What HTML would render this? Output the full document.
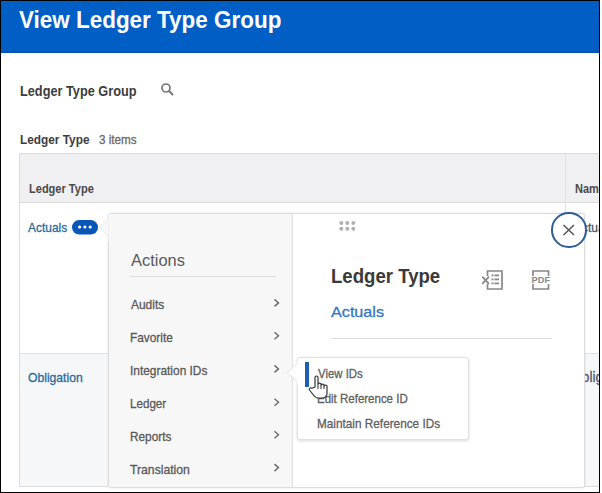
<!DOCTYPE html>
<html><head><meta charset="utf-8">
<style>
*{margin:0;padding:0;box-sizing:border-box}
html,body{width:602px;height:493px;overflow:hidden;background:#fff}
body{position:relative;font-family:"Liberation Sans",sans-serif}
.a{position:absolute}
.t{position:absolute;white-space:nowrap;line-height:1;transform-origin:0 0}
</style></head><body>

<!-- header -->
<div class="a" style="left:0;top:0;width:602px;height:52.5px;background:#005ec5;border-bottom:2px solid #0355b5"></div>

<!-- section labels -->
<svg class="a" style="left:158px;top:80px" width="18" height="18" viewBox="0 0 18 18">
  <circle cx="8" cy="8" r="4" fill="none" stroke="#777" stroke-width="1.7"/>
  <line x1="11" y1="11" x2="14.5" y2="14.5" stroke="#777" stroke-width="2" stroke-linecap="round"/>
</svg>

<!-- table -->
<div class="a" style="left:19px;top:153px;width:600px;height:334px;border:1px solid #dcdcdc;border-right:none;background:#fff"></div>
<div class="a" style="left:20px;top:154px;width:600px;height:49px;background:#f0f0f2;border-bottom:1px solid #dcdcdc"></div>
<div class="a" style="left:565px;top:154px;width:1px;height:333px;background:#e2e2e2"></div>
<div class="a" style="left:20px;top:353px;width:600px;height:133px;background:#f6f7f9;border-top:1px solid #e0e0e0"></div>
<!-- pill -->
<svg class="a" style="left:70px;top:218px" width="30" height="19" viewBox="0 0 30 19">
  <rect x="2" y="2" width="26" height="14.6" rx="7.3" fill="#0857b8"/>
  <circle cx="9.6" cy="9" r="1.55" fill="#fff"/><circle cx="14.9" cy="9" r="1.55" fill="#fff"/><circle cx="20.2" cy="9" r="1.55" fill="#fff"/>
</svg>

<div class="t" style="left:18.80px;top:8.00px;font-size:24.8px;font-weight:bold;color:#fff;transform:scaleX(0.9052)">View Ledger Type Group</div>
<div class="t" style="left:20.00px;top:84.00px;font-size:14.5px;font-weight:bold;color:#3d3d3d;transform:scaleX(0.8780)">Ledger Type Group</div>
<div class="t" style="left:20.00px;top:133.00px;font-size:13.5px;font-weight:bold;color:#3d3d3d;transform:scaleX(0.8764)">Ledger Type</div>
<div class="t" style="left:98.90px;top:133.00px;font-size:13px;font-weight:normal;color:#6a6a6a;transform:scaleX(0.8986);-webkit-text-stroke:0.3px #6a6a6a">3 items</div>
<div class="t" style="left:29.30px;top:183.00px;font-size:12.4px;font-weight:bold;color:#4a4a4a;transform:scaleX(0.8907)">Ledger Type</div>
<div class="t" style="left:575.30px;top:183.00px;font-size:12.4px;font-weight:bold;color:#4a4a4a;transform:scaleX(0.8900)">Name</div>
<div class="t" style="left:28.30px;top:221.00px;font-size:13.2px;font-weight:normal;color:#2a6a9a;transform:scaleX(0.9049);-webkit-text-stroke:0.3px #2a6a9a">Actuals</div>
<div class="t" style="left:28.00px;top:371.00px;font-size:13.2px;font-weight:normal;color:#2a6a9a;transform:scaleX(0.9213);-webkit-text-stroke:0.3px #2a6a9a">Obligation</div>
<div class="t" style="left:573.80px;top:221.00px;font-size:13.2px;font-weight:normal;color:#4a5560;transform:scaleX(0.9050);-webkit-text-stroke:0.3px #4a5560">Actuals</div>
<div class="t" style="left:571.00px;top:371.00px;font-size:13.8px;font-weight:normal;color:#5a5870;transform:scaleX(1.0000);-webkit-text-stroke:0.3px #5a5870">Obligation</div>
<!-- popup -->
<div class="a" style="left:108px;top:213px;width:477px;height:275px;background:#fff;border:1px solid #dcdcdc;border-radius:3px;box-shadow:0 0 3px rgba(0,0,0,0.09)"></div>
<div class="a" style="left:109px;top:214px;width:183px;height:273px;background:#f7f7f7;border-radius:2px 0 0 2px"></div>
<div class="a" style="left:292px;top:214px;width:1px;height:273px;background:#e2e2e2;box-shadow:0 0 1.5px rgba(0,0,0,0.08)"></div>
<svg class="a" style="left:98px;top:214px" width="12" height="28" viewBox="0 0 12 28">
  <path d="M10.5 4 L1.5 13.4 L10.5 23" fill="#f7f7f7" stroke="#e8e8ee" stroke-width="1"/>
  <rect x="10.5" y="0" width="2" height="28" fill="#f7f7f7"/>
</svg>

<div class="a" style="left:130px;top:276px;width:146px;height:1px;background:#dcdcdc"></div>
<svg class="a" style="left:270px;top:296px" width="14" height="182" viewBox="0 0 14 182">
  <g fill="none" stroke="#6a6a6a" stroke-width="1.4">
    <path d="M4.5 3.4 L8.5 6.9 L4.5 10.4"/>
    <path d="M4.5 36.2 L8.5 39.7 L4.5 43.2"/>
    <path d="M4.5 69.4 L8.5 72.9 L4.5 76.4"/>
    <path d="M4.5 102.7 L8.5 106.2 L4.5 109.7"/>
    <path d="M4.5 135.2 L8.5 138.7 L4.5 142.2"/>
    <path d="M4.5 168.1 L8.5 171.6 L4.5 175.1"/>
  </g>
</svg>

<!-- right panel -->
<svg class="a" style="left:338px;top:220px" width="18" height="12" viewBox="0 0 18 12">
  <g fill="#b0b0b0"><circle cx="3.3" cy="3" r="2"/><circle cx="9.3" cy="3" r="2"/><circle cx="15.3" cy="3" r="2"/>
  <circle cx="3.3" cy="8.8" r="2"/><circle cx="9.3" cy="8.8" r="2"/><circle cx="15.3" cy="8.8" r="2"/></g>
</svg>
<div class="a" style="left:331px;top:338px;width:221px;height:1px;background:#dcdcdc"></div>

<!-- excel icon -->
<svg class="a" style="left:480px;top:268px" width="26" height="24" viewBox="0 0 26 24">
  <g fill="none" stroke="#888" stroke-width="1.7">
    <path d="M7.5 8 V3 H22 V21 H7.5 V16"/>
  </g>
  <path d="M2.2 8.6 L9 15.9 M9 8.6 L2.2 15.9" stroke="#888" stroke-width="1.8"/>
  <g fill="#888">
    <rect x="11.5" y="6.5" width="2" height="1.8"/><rect x="14.5" y="6.5" width="4.5" height="1.8"/>
    <rect x="11.5" y="10.5" width="2" height="1.8"/><rect x="14.5" y="10.5" width="4.5" height="1.8"/>
    <rect x="11.5" y="14.5" width="2" height="1.8"/><rect x="14.5" y="14.5" width="4.5" height="1.8"/>
  </g>
</svg>
<!-- pdf icon -->
<svg class="a" style="left:530px;top:268px" width="22" height="24" viewBox="0 0 22 24">
  <g fill="none" stroke="#888" stroke-width="1.7">
    <path d="M3 8 V3 H18.5 V8"/>
    <path d="M3 16 V21 H18.5 V16"/>
  </g>
  <text x="10.8" y="15.4" font-family="Liberation Sans" font-weight="bold" font-size="9" fill="#888" text-anchor="middle" textLength="18.5" lengthAdjust="spacingAndGlyphs">PDF</text>
</svg>

<!-- close -->
<div class="a" style="left:551px;top:212px;width:35.5px;height:35.5px;border-radius:50%;border:2px solid #2b5d97;background:#fff"></div>
<svg class="a" style="left:560px;top:222px" width="18" height="16" viewBox="0 0 18 16">
  <path d="M3.5 3 L14 13 M14 3 L3.5 13" stroke="#555" stroke-width="1.5"/>
</svg>

<!-- submenu -->
<div class="a" style="left:297px;top:357px;width:172px;height:82.5px;background:#fff;border:1px solid #e2e2e2;border-radius:3px;box-shadow:0 1px 3px rgba(0,0,0,0.15)"></div>
<svg class="a" style="left:286px;top:361px" width="13" height="24" viewBox="0 0 13 24">
  <path d="M11.5 2 L1.2 11.5 L11.5 21" fill="#fff" stroke="#e2e2e2" stroke-width="1"/>
  <rect x="11" y="0" width="2" height="24" fill="#fff"/>
</svg>
<div class="a" style="left:305px;top:362px;width:3.5px;height:24.5px;background:#1c5fb0"></div>

<div class="t" style="left:130.50px;top:252.00px;font-size:16.5px;font-weight:normal;color:#5a5a5a;transform:scaleX(0.9971)">Actions</div>
<div class="t" style="left:130.80px;top:298.00px;font-size:13.4px;font-weight:normal;color:#585858;transform:scaleX(0.8928);-webkit-text-stroke:0.3px #585858">Audits</div>
<div class="t" style="left:129.92px;top:331.00px;font-size:13.4px;font-weight:normal;color:#585858;transform:scaleX(0.8844);-webkit-text-stroke:0.3px #585858">Favorite</div>
<div class="t" style="left:129.91px;top:364.00px;font-size:13.4px;font-weight:normal;color:#585858;transform:scaleX(0.8890);-webkit-text-stroke:0.3px #585858">Integration IDs</div>
<div class="t" style="left:129.93px;top:397.00px;font-size:13.4px;font-weight:normal;color:#585858;transform:scaleX(0.8682);-webkit-text-stroke:0.3px #585858">Ledger</div>
<div class="t" style="left:129.92px;top:430.00px;font-size:13.4px;font-weight:normal;color:#585858;transform:scaleX(0.8811);-webkit-text-stroke:0.3px #585858">Reports</div>
<div class="t" style="left:130.30px;top:463.00px;font-size:13.4px;font-weight:normal;color:#585858;transform:scaleX(0.9112);-webkit-text-stroke:0.3px #585858">Translation</div>
<div class="t" style="left:330.84px;top:267.00px;font-size:19.3px;font-weight:bold;color:#3a3a3a;transform:scaleX(0.9646)">Ledger Type</div>
<div class="t" style="left:330.90px;top:304.00px;font-size:15.5px;font-weight:normal;color:#3477c0;transform:scaleX(1.0435);-webkit-text-stroke:0.3px #3477c0">Actuals</div>
<div class="t" style="left:317.50px;top:368.00px;font-size:12.6px;font-weight:normal;color:#606060;transform:scaleX(0.9052);-webkit-text-stroke:0.3px #606060">View IDs</div>
<div class="t" style="left:316.89px;top:393.00px;font-size:12.6px;font-weight:normal;color:#606060;transform:scaleX(0.9125);-webkit-text-stroke:0.3px #606060">Edit Reference ID</div>
<div class="t" style="left:316.86px;top:418.00px;font-size:12.6px;font-weight:normal;color:#606060;transform:scaleX(0.9355);-webkit-text-stroke:0.3px #606060">Maintain Reference IDs</div>
<!-- cursor -->
<svg class="a" style="left:306px;top:372px" width="26" height="30" viewBox="0 0 26 30">
  <path d="M9 15 V5.5 C9 3.5 12 3.5 12 5.5 V12 C12 10.8 15 10.8 15 12 V13 C15 11.8 18 11.8 18 13 V14 C18 12.8 21 12.8 21 14 V21 C21 24 19 26 17 26 H12 C10 26 8.5 24.5 7 22.5 L3.5 18 C2.6 16.6 4.5 15 6 16.3 Z" fill="#fff" stroke="#333" stroke-width="1.2" stroke-linejoin="round"/>
  <path d="M12 12 V17 M15 13 V17 M18 14 V17" stroke="#333" stroke-width="1"/>
</svg>

<!-- cursor-below -->
<!-- black frame -->
<div class="a" style="left:0;top:0;width:600px;height:493px;border-left:1px solid #000;border-top:1px solid #000;border-right:1px solid #000;border-bottom:1px solid #000;border-bottom-width:1.5px"></div>
<div class="a" style="left:600px;top:0;width:2px;height:493px;background:#fff"></div>
</body></html>
